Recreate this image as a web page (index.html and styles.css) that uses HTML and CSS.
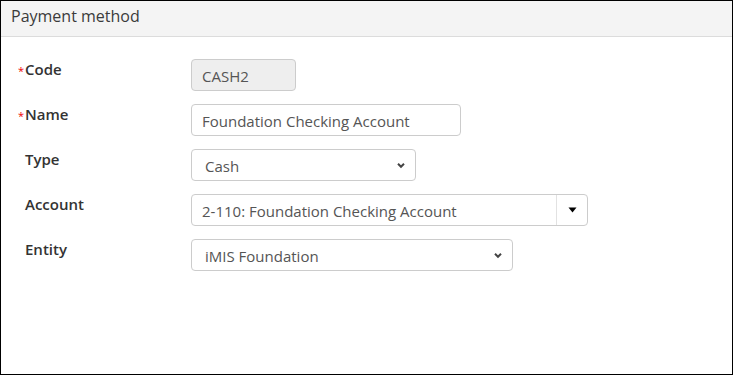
FILE: index.html
```html
<!DOCTYPE html>
<html>
<head>
<meta charset="utf-8">
<link rel="stylesheet" href="styles.css">
</head>
<body>
<div class="panel">
  <div class="panel-head">Payment method</div>
  <div class="panel-body">
    <div class="row">
      <div class="label req">Code</div>
      <div class="field"><div class="input readonly w-code"><span class="txt">CASH2</span></div></div>
    </div>
    <div class="row">
      <div class="label req">Name</div>
      <div class="field"><div class="input w-name"><span class="txt">Foundation Checking Account</span></div></div>
    </div>
    <div class="row">
      <div class="label">Type</div>
      <div class="field">
        <div class="input select w-type"><span class="txt">Cash</span>
          <svg class="chev" width="10" height="7" viewBox="0 0 10 7"><path d="M2 1.8 L5 4.8 L8 1.8" fill="none" stroke="#444" stroke-width="2"/></svg>
        </div>
      </div>
    </div>
    <div class="row">
      <div class="label">Account</div>
      <div class="field">
        <div class="input combo w-account"><span class="txt combo-text">2-110: Foundation Checking Account</span>
          <span class="combo-btn"><svg width="9" height="6" viewBox="0 0 9 6"><path d="M0.5 0.5 L8.5 0.5 L4.5 5.5 Z" fill="#000"/></svg></span>
        </div>
      </div>
    </div>
    <div class="row">
      <div class="label">Entity</div>
      <div class="field">
        <div class="input select w-entity"><span class="txt">iMIS Foundation</span>
          <svg class="chev" width="10" height="7" viewBox="0 0 10 7"><path d="M2 1.8 L5 4.8 L8 1.8" fill="none" stroke="#444" stroke-width="2"/></svg>
        </div>
      </div>
    </div>
  </div>
</div>
</body>
</html>
```
FILE: styles.css
```css
html, body {
  margin: 0;
  padding: 0;
  background: #fff;
}
.panel {
  width: 733px;
  height: 375px;
  box-sizing: border-box;
  border: 1px solid #000;
  font-family: "Open Sans", "Noto Sans", sans-serif;
  color: #333;
  background: #fff;
}
.panel-head {
  height: 36px;
  box-sizing: border-box;
  background: #f4f4f4;
  border-bottom: 1px solid #dcdcdc;
  padding: 5px 0 0 10px;
  font-size: 16px;
  line-height: 20px;
  color: #3b3b3b;
}
.panel-body {
  padding: 22px 0 0 0;
  display: flex;
  flex-direction: column;
  gap: 13px;
}
.row {
  display: flex;
  align-items: flex-start;
  height: 32px;
}
.label {
  width: 190px;
  box-sizing: border-box;
  padding: 0 0 0 24px;
  font-size: 15px;
  font-weight: 600;
  line-height: 20px;
  color: #333;
  position: relative;
}
.label.req::before {
  content: "*";
  color: #e00;
  position: absolute;
  left: 17px;
  top: 6px;
  font-size: 11px;
  line-height: 11px;
  font-weight: 400;
}
.field {
  display: flex;
}
.input {
  height: 32px;
  box-sizing: border-box;
  border: 1px solid #cccccc;
  border-radius: 4px;
  background: #fff;
  font-size: 15px;
  line-height: 20px;
  color: #555;
  padding: 0 10px;
  white-space: nowrap;
  display: flex;
  align-items: center;
}
.txt {
  padding-top: 2px;
}
.readonly {
  background: #eeeeee;
}
.w-code { width: 105px; }
.w-name { width: 270px; }
.w-type { width: 225px; }
.w-account { width: 397px; }
.w-entity { width: 322px; }
.select {
  justify-content: space-between;
  padding-left: 13px;
  padding-right: 9px;
}
.chev {
  display: block;
}
.combo {
  padding: 0;
}
.combo-text {
  flex: 1;
  padding-left: 10px;
}
.combo-btn {
  width: 30px;
  height: 30px;
  border-left: 1px solid #e2e2e2;
  display: flex;
  align-items: center;
  justify-content: center;
}
.combo-btn svg { display: block; }
```
